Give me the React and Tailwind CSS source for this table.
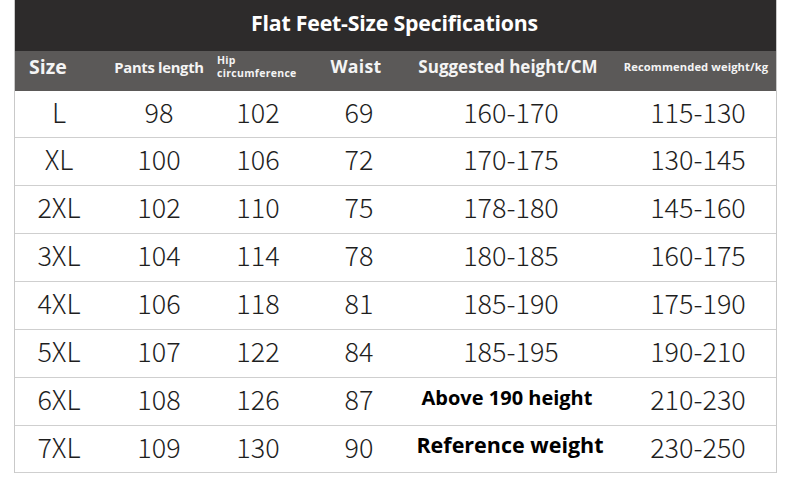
import React from "react";

const rows = [
  ["L", "98", "102", "69", "160-170", "115-130"],
  ["XL", "100", "106", "72", "170-175", "130-145"],
  ["2XL", "102", "110", "75", "178-180", "145-160"],
  ["3XL", "104", "114", "78", "180-185", "160-175"],
  ["4XL", "106", "118", "81", "185-190", "175-190"],
  ["5XL", "107", "122", "84", "185-195", "190-210"],
  ["6XL", "108", "126", "87", "above", "210-230"],
  ["7XL", "109", "130", "90", "ref", "230-250"],
];

const grid = "grid grid-cols-[86px_116px_82px_120px_184px_174px]";
const thin = "font-['Noto_Sans_CJK_SC','Noto_Sans',sans-serif] font-light text-[27px] text-[#1e1e1e] -mt-[4px] whitespace-nowrap";

export default function App() {
  return (
    <div className="w-[790px] h-[491px] bg-white pl-[14px] pt-0">
      <div className="w-[763px] border-x border-[#c9c9c9]">
        <div className="h-[51px] bg-[#2d2b2b] flex items-center justify-center text-white font-['Open_Sans',sans-serif] font-bold text-[21.3px] tracking-[-0.2px] whitespace-nowrap">
          <span className="-mt-[6px] pr-[2px]">Flat Feet-Size Specifications</span>
        </div>
        <div className={`${grid} h-[40px] bg-[#5b5958] text-[#f4f4f4] font-['Open_Sans',sans-serif] font-bold items-center whitespace-nowrap`}>
          <div className="pl-[14px] text-[19.5px] -mt-[9px]">Size</div>
          <div className="text-center text-[14.8px] tracking-[-0.3px] -mt-[8px]">Pants length</div>
          <div className="text-[10.5px] leading-[12.5px] pl-[0px] -mt-[9px] tracking-[0.3px]">Hip<br />circumference</div>
          <div className="text-center text-[17.7px] pr-[6px] tracking-[0.3px] -mt-[9px]">Waist</div>
          <div className="text-center text-[17px] pr-[6px] -mt-[8px] -ml-[10px] -mr-[10px]">Suggested height/CM</div>
          <div className="text-center text-[11.2px] pl-[12px] tracking-[0.1px] -mt-[7px]">Recommended weight/kg</div>
        </div>
        {rows.map((r, i) => (
          <div key={i} className={`${grid} items-center ${i === 0 ? "h-[46px]" : "h-[48px] border-t border-[#cfcfcf]"} ${i === rows.length - 1 ? "border-b" : ""}`}>
            <div className={`${thin} text-center pl-[2px]`}>{r[0]}</div>
            <div className={`${thin} text-center`}>{r[1]}</div>
            <div className={`${thin} text-center`}>{r[2]}</div>
            <div className={`${thin} text-center`}>{r[3]}</div>
            {r[4] === "above" ? (
              <div className="text-center font-['Open_Sans',sans-serif] font-bold text-[20px] text-black -mt-[7px] pr-[8px] whitespace-nowrap">Above 190 height</div>
            ) : r[4] === "ref" ? (
              <div className="text-center font-['Open_Sans',sans-serif] font-bold text-[21.5px] text-black -mt-[7px] -ml-[6px] -mr-[4px] whitespace-nowrap">Reference weight</div>
            ) : (
              <div className={`${thin} text-center`}>{r[4]}</div>
            )}
            <div className={`${thin} text-center pl-[16px]`}>{r[5]}</div>
          </div>
        ))}
      </div>
    </div>
  );
}
